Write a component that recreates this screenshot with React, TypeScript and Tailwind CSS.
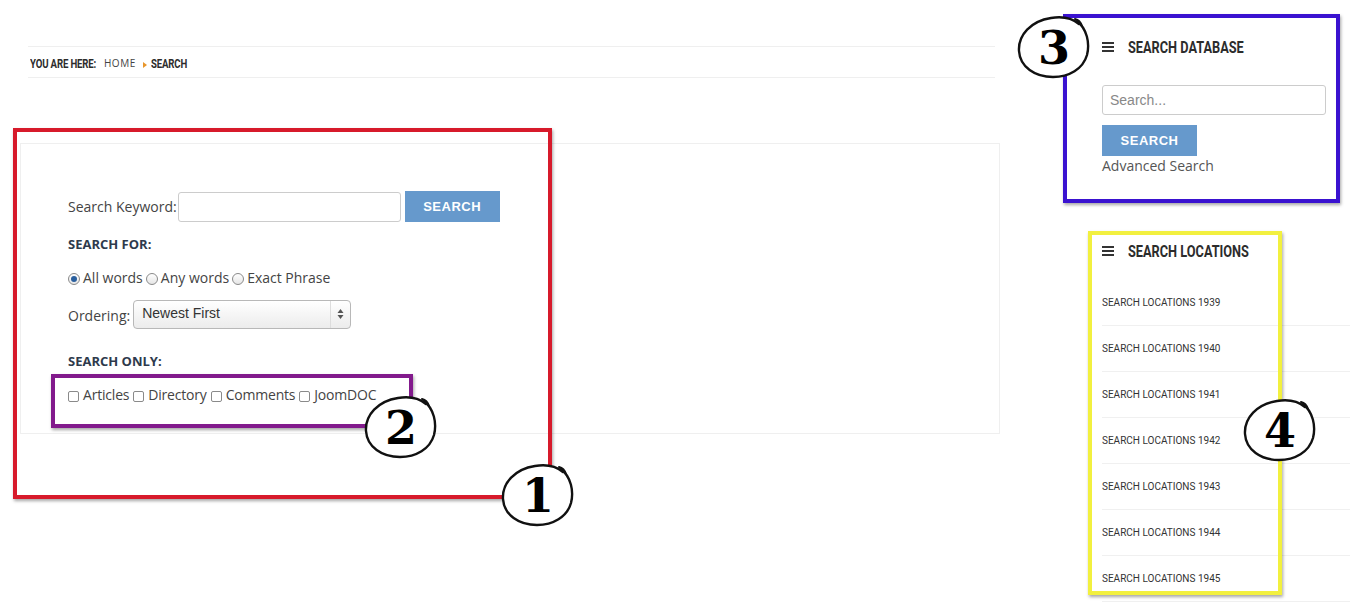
import React from "react";

const body = { fontFamily: '"Open Sans", "Noto Sans", sans-serif' };
const roboto = { fontFamily: 'Roboto, "DejaVu Sans", sans-serif' };

function Narrow({ text, w, size, scale, className = "" }: { text: string; w: string; size: string; scale: string; className?: string }) {
  return (
    <div className={"overflow-visible whitespace-nowrap shrink-0 " + w}>
      <span
        className={"inline-block origin-left font-bold text-[#2c2c2c] leading-none " + scale + " " + size + " " + className}
        style={roboto}
      >
        {text}
      </span>
    </div>
  );
}

function Hamburger() {
  return (
    <svg width="12" height="10" viewBox="0 0 12 10" className="shrink-0">
      <rect x="0" y="0" width="12" height="2" fill="#333" />
      <rect x="0" y="4" width="12" height="2" fill="#333" />
      <rect x="0" y="8" width="12" height="2" fill="#333" />
    </svg>
  );
}

function Badge({ n, className }: { n: string; className: string }) {
  return (
    <div className={"absolute w-[74px] h-[64px] flex items-center justify-center " + className}>
      <svg className="absolute inset-0" width="74" height="64" viewBox="0 0 74 64">
        <path
          d="M60 6 C 70 14, 73 28, 70 40 C 66 54, 52 62, 36 62 C 18 62, 3 52, 2 36 C 1 20, 14 6, 34 3 C 46 1, 56 4, 62 9"
          fill="white"
          stroke="#111"
          strokeWidth="2.4"
          strokeLinecap="round"
        />
        <path d="M58 4 C 62 5, 64 8, 65 11" fill="none" stroke="#111" strokeWidth="2" strokeLinecap="round" />
      </svg>
      <span
        className="relative text-[46px] font-bold leading-none text-black mt-[2px]"
        style={{ fontFamily: '"DejaVu Serif", "Liberation Serif", serif' }}
      >
        {n}
      </span>
    </div>
  );
}

function Radio({ checked }: { checked?: boolean }) {
  return (
    <span className="inline-flex w-[12px] h-[12px] rounded-full border border-[#8a8a8a] bg-gradient-to-b from-white to-[#e6e6e6] items-center justify-center mt-[6px] shrink-0">
      {checked && <span className="w-[6px] h-[6px] rounded-full bg-[#2a5f9e]" />}
    </span>
  );
}

function Check({ first }: { first?: boolean }) {
  return (
    <span
      className={
        "inline-block w-[11px] h-[11px] rounded-[2px] border border-[#8a8a8a] bg-white mt-[7px] mr-[4px] shrink-0 " +
        (first ? "" : "ml-[4px]")
      }
    />
  );
}

export default function App() {
  const years = ["1939", "1940", "1941", "1942", "1943", "1944", "1945"];
  return (
    <div className="relative w-[1350px] h-[602px] overflow-hidden bg-white" style={body}>
      <div className="flex">
        {/* Left column */}
        <div className="ml-[20px] w-[980px] shrink-0">
          <div className="ml-[8px] w-[967px] mt-[46px] h-[32px] border-y border-[#efefef] flex items-center pl-[2px] text-[#222]">
            <Narrow text="YOU ARE HERE:" w="w-[74px]" size="text-[13px]" scale="scale-x-[0.74]" className="tracking-[-0.2px]" />
            <span className="text-[10px] tracking-[0.5px] text-[#444] mt-[3px]" style={body}>
              HOME
            </span>
            <svg width="6" height="8" viewBox="0 0 6 8" className="ml-[6px] mt-[5px]">
              <path d="M1 1 L5 4 L1 7 Z" fill="#e8962b" />
            </svg>
            <div className="ml-[3px]">
              <Narrow text="SEARCH" w="w-[40px]" size="text-[13px]" scale="scale-x-[0.74]" className="tracking-[-0.2px]" />
            </div>
          </div>

          <div className="mt-[65px] h-[291px] border border-[#efefef] pl-[47px] pt-[47px] text-[14px] text-[#444]">
            <div className="flex items-center h-[31px]">
              <span>Search Keyword:</span>
              <input className="ml-[1px] w-[223px] h-[30px] border border-[#ccc] rounded-[3px] bg-white" />
              <button
                className="ml-[4px] w-[95px] h-[31px] bg-[#6699cc] text-white text-[13px] font-bold tracking-[0.5px]"
                style={{ fontFamily: '"Liberation Sans", Arial, sans-serif' }}
              >
                SEARCH
              </button>
            </div>
            <div className="mt-[13px] text-[13px] font-bold text-[#2e3a4c]">SEARCH FOR:</div>
            <div className="mt-[12px] flex items-start gap-[3px] text-[14px] text-[#444]">
              <Radio checked />
              <span>All words</span>
              <Radio />
              <span>Any words</span>
              <Radio />
              <span>Exact Phrase</span>
            </div>
            <div className="mt-[12px] flex items-center">
              <span className="mt-[3px]">Ordering:</span>
              <div
                className="ml-[3px] w-[218px] h-[29px] border border-[#b8b8b8] rounded-[4px] bg-gradient-to-b from-white to-[#ececec] flex items-center justify-between pl-[8px] pr-[6px] text-[14px] text-[#333]"
                style={{ fontFamily: '"Liberation Sans", Arial, sans-serif' }}
              >
                <span className="-mt-[2px]">Newest First</span>
                <div className="flex items-center h-full border-l border-[#ddd] pl-[6px]">
                  <svg width="7" height="12" viewBox="0 0 7 12">
                    <path d="M3.5 1 L6.5 5 L0.5 5 Z" fill="#555" />
                    <path d="M3.5 11 L6.5 7 L0.5 7 Z" fill="#555" />
                  </svg>
                </div>
              </div>
            </div>
            <div className="mt-[23px] text-[13px] font-bold text-[#2e3a4c]">SEARCH ONLY:</div>
            <div className="mt-[13px] flex items-start text-[14px] text-[#444] tracking-[-0.2px]">
              <Check first />
              <span>Articles</span>
              <Check />
              <span>Directory</span>
              <Check />
              <span>Comments</span>
              <Check />
              <span>JoomDOC</span>
            </div>
          </div>
        </div>

        {/* Right column */}
        <div className="ml-[102px] w-[248px] shrink-0">
          <div className="mt-[38px] flex items-center gap-[14px] h-[18px]">
            <Hamburger />
            <Narrow text="SEARCH DATABASE" w="w-[150px]" size="text-[17px]" scale="scale-x-[0.75]" />
          </div>
          <input
            placeholder="Search..."
            className="mt-[29px] w-[224px] h-[30px] border border-[#ccc] rounded-[3px] px-[7px] text-[14px] placeholder:text-[#888] block"
            style={{ fontFamily: '"Liberation Sans", Arial, sans-serif' }}
          />
          <button
            className="mt-[10px] w-[95px] h-[31px] bg-[#6699cc] text-white text-[13px] font-bold tracking-[0.5px] block"
            style={{ fontFamily: '"Liberation Sans", Arial, sans-serif' }}
          >
            SEARCH
          </button>
          <div className="text-[14px] text-[#555] leading-[20px]">Advanced Search</div>

          <div className="mt-[66px] flex items-center gap-[14px] h-[18px]">
            <Hamburger />
            <Narrow text="SEARCH LOCATIONS" w="w-[150px]" size="text-[17px]" scale="scale-x-[0.75]" />
          </div>
          <div className="mt-[20px]">
            {years.map((y) => (
              <div
                key={y}
                className="h-[46px] border-b border-[#f0f0f0] flex items-center text-[10px] text-[#333]"
                style={roboto}
              >
                SEARCH LOCATIONS {y}
              </div>
            ))}
          </div>
        </div>
      </div>

      {/* Annotation overlays */}
      <div className="absolute left-[13px] top-[128px] w-[539px] h-[371px] border-[4px] border-[#d71a2b] shadow-[1px_2px_3px_rgba(0,0,0,0.35)] pointer-events-none" />
      <div className="absolute left-[51px] top-[374px] w-[362px] h-[54px] border-[4px] border-[#821a8c] shadow-[1px_2px_3px_rgba(0,0,0,0.35)] pointer-events-none" />
      <div className="absolute left-[1063px] top-[14px] w-[277px] h-[189px] border-[4px] border-[#3a12d0] shadow-[1px_2px_3px_rgba(0,0,0,0.35)] pointer-events-none" />
      <div className="absolute left-[1088px] top-[231px] w-[194px] h-[364px] border-[4px] border-[#f2f03f] shadow-[1px_2px_3px_rgba(0,0,0,0.35)] pointer-events-none" />

      <Badge n="1" className="left-[501px] top-[463px]" />
      <Badge n="2" className="left-[364px] top-[395px]" />
      <Badge n="3" className="left-[1017px] top-[15px]" />
      <Badge n="4" className="left-[1243px] top-[398px]" />
    </div>
  );
}
